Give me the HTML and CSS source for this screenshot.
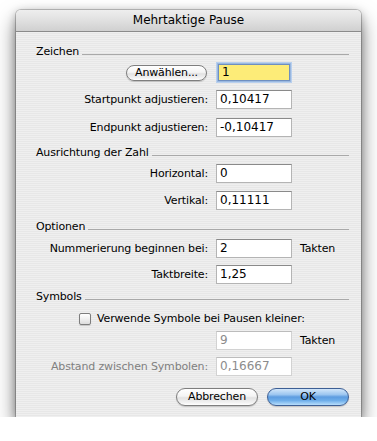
FILE: index.html
```html
<!DOCTYPE html>
<html>
<head>
<meta charset="utf-8">
<link rel="stylesheet" href="styles.css">
</head>
<body>
<div class="win">
  <div class="titlebar">Mehrtaktige Pause</div>
  <div class="content">
    <div class="hdr h1">Zeichen</div>
    <div class="row r1">
      <div class="lab"><button class="btn small">Anwählen...</button></div>
      <div class="field focus">1</div>
    </div>
    <div class="row r2">
      <div class="lab">Startpunkt adjustieren:</div>
      <div class="field">0,10417</div>
    </div>
    <div class="row r3">
      <div class="lab">Endpunkt adjustieren:</div>
      <div class="field">-0,10417</div>
    </div>
    <div class="hdr h2">Ausrichtung der Zahl</div>
    <div class="row r4">
      <div class="lab">Horizontal:</div>
      <div class="field">0</div>
    </div>
    <div class="row r5">
      <div class="lab">Vertikal:</div>
      <div class="field">0,11111</div>
    </div>
    <div class="hdr h3">Optionen</div>
    <div class="row r6">
      <div class="lab">Nummerierung beginnen bei:</div>
      <div class="field">2</div>
      <div class="unit">Takten</div>
    </div>
    <div class="row r7">
      <div class="lab">Taktbreite:</div>
      <div class="field">1,25</div>
    </div>
    <div class="hdr h4">Symbols</div>
    <div class="check">
      <span class="box"></span>
      <span class="ctext">Verwende Symbole bei Pausen kleiner:</span>
    </div>
    <div class="row r8">
      <div class="lab"></div>
      <div class="field dis">9</div>
      <div class="unit">Takten</div>
    </div>
    <div class="row r9">
      <div class="lab dislab">Abstand zwischen Symbolen:</div>
      <div class="field dis">0,16667</div>
    </div>
    <div class="buttons">
      <button class="btn">Abbrechen</button>
      <button class="btn default">OK</button>
    </div>
  </div>
</div>
</body>
</html>
```
FILE: styles.css
```css
html, body {
  margin: 0;
  padding: 0;
  background: #ffffff;
}
body {
  padding: 10px 0 0 16px;
  font-family: "DejaVu Sans", sans-serif;
  color: #000;
}
.win {
  width: 345px;
  height: 407px;
  border-radius: 5px 5px 0 0;
  box-shadow: 0 0 0 1px rgba(0,0,0,0.2), 0 10px 20px rgba(0,0,0,0.55), 0 2px 8px rgba(0,0,0,0.25);
  background: repeating-linear-gradient(180deg, #efefef 0px, #efefef 1px, #e7e7e7 1px, #e7e7e7 2px);
  display: flex;
  flex-direction: column;
  overflow: hidden;
}
.titlebar {
  height: 21px;
  border-bottom: 1px solid #8a8a8a;
  background: linear-gradient(180deg, #eeeeee 0%, #e0e0e0 50%, #d0d0d0 100%);
  border-radius: 5px 5px 0 0;
  text-align: center;
  font-size: 12px;
  line-height: 21px;
}
.content {
  display: flex;
  flex-direction: column;
  font-size: 11px;
  letter-spacing: -0.15px;
}
.hdr {
  display: flex;
  height: 14px;
  line-height: 14px;
  padding: 0 12px 0 20px;
}
.hdr::after {
  content: "";
  flex: 1;
  border-top: 1px solid #a9a9a9;
  margin-top: 9px;
  margin-left: 3px;
}
.h1 { margin-top: 13px; }
.h2 { margin-top: 9px; }
.h3 { margin-top: 10px; }
.h4 { margin-top: 6px; }
.row {
  display: grid;
  grid-template-columns: 180px 76px auto;
  column-gap: 8px;
  padding-left: 12px;
  height: 19px;
  align-items: center;
}
.r1 { margin-top: 4px; }
.r2 { margin-top: 8px; }
.r3 { margin-top: 9px; }
.r4 { margin-top: 4px; }
.r5 { margin-top: 8px; }
.r6 { margin-top: 4px; }
.r7 { margin-top: 8px; }
.r8 { margin-top: 5px; }
.r9 { margin-top: 8px; }
.lab {
  text-align: right;
  white-space: nowrap;
  line-height: 19px;
}
.dislab { color: #808080; }
.unit { line-height: 19px; padding-top: 1px; }
.field {
  box-sizing: border-box;
  height: 19px;
  background: #fff;
  border: 1px solid #b4b4b4;
  border-top-color: #8a8a8a;
  font-size: 12px;
  letter-spacing: 0;
  line-height: 17px;
  padding-left: 3px;
}
.field.focus {
  height: 17px;
  margin: 0 2px;
  background: #fdec78;
  border: 1px solid #6f8fc0;
  box-shadow: 0 0 0 1px #9ab8e0, 0 0 0 2px #b9d0ee;
  line-height: 15px;
}
.field.dis {
  color: #8c8c8c;
  border-color: #d2d2d2;
  border-top-color: #bcbcbc;
}
.btn {
  font-family: "DejaVu Sans", sans-serif;
  font-size: 11px;
  letter-spacing: -0.15px;
  color: #000;
  width: 82px;
  height: 18px;
  padding: 0;
  border-radius: 9px;
  border: 1px solid #7e7e7e;
  background: linear-gradient(180deg, #ffffff 0%, #f4f4f4 45%, #e2e2e2 55%, #f2f2f2 85%, #ffffff 100%);
  box-shadow: 0 1px 1px rgba(0,0,0,0.18);
  line-height: 16px;
}
.btn.small {
  width: 81px;
  height: 16px;
  border-radius: 8px;
  line-height: 14px;
  margin-right: 1px;
}
.btn.default {
  border-color: #3d5f95;
  background: linear-gradient(180deg, #d2e6fa 0%, #9cc6f0 35%, #5d9ce0 50%, #6eaeea 72%, #b8defc 100%);
}
.check {
  display: flex;
  align-items: center;
  margin-top: 9px;
  padding-left: 63px;
  height: 12px;
}
.box {
  box-sizing: border-box;
  width: 12px;
  height: 12px;
  border: 1px solid #7d7d7d;
  border-radius: 2px;
  background: linear-gradient(180deg, #ffffff 0%, #f0f0f0 50%, #dcdcdc 100%);
  box-shadow: 0 1px 1px rgba(0,0,0,0.15);
}
.ctext {
  margin-left: 6px;
  line-height: 14px;
}
.buttons {
  display: flex;
  justify-content: flex-end;
  gap: 9px;
  padding-right: 12px;
  margin-top: 12px;
}
```
